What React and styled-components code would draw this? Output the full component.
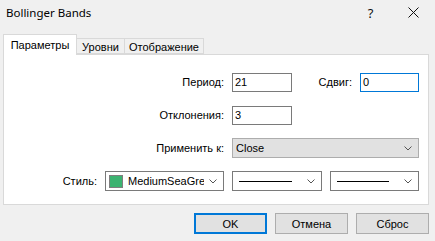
import styled, { createGlobalStyle } from "styled-components";

const GlobalStyle = createGlobalStyle`
    html, body {
        margin: 0;
        padding: 0;
        background: #f0f0f0;
    }
    * {
        box-sizing: border-box;
    }
`;

const Window = styled.div`
    width: 435px;
    height: 241px;
    background: #f0f0f0;
    display: flex;
    flex-direction: column;
    font-family: "Liberation Sans", Arial, sans-serif;
    font-size: 11px;
    color: #000;
    overflow: hidden;
`;

const TitleBar = styled.div`
    height: 25px;
    display: flex;
    align-items: center;
    padding-left: 6px;
`;

const TitleText = styled.div`
    flex: 1;
    font-family: "Noto Sans", "Open Sans", sans-serif;
    font-size: 11.5px;
    color: #000;
    padding-bottom: 1px;
`;

const CaptionButton = styled.div`
    width: 43px;
    height: 25px;
    display: flex;
    align-items: center;
    justify-content: center;
    font-family: "Noto Sans", sans-serif;
    font-size: 13px;
    color: #111;
`;

const TabStrip = styled.div`
    margin-top: 9px;
    height: 20px;
    display: flex;
    align-items: flex-end;
    padding-left: 3px;
    position: relative;
    z-index: 1;
`;

const Tab = styled.div`
    width: ${p => p.$w}px;
    height: ${p => (p.$active ? 21 : 16)}px;
    margin-bottom: ${p => (p.$active ? -1 : 0)}px;
    background: ${p => (p.$active ? "#fff" : "#f0f0f0")};
    border: 1px solid #d9d9d9;
    border-bottom: ${p => (p.$active ? "none" : "1px solid #d9d9d9")};
    border-left: ${p => (p.$first ? "1px solid #d9d9d9" : "none")};
    display: flex;
    align-items: center;
    justify-content: center;
    padding-top: ${p => (p.$active ? 0 : 1)}px;
    white-space: nowrap;
`;

const Panel = styled.div`
    margin: 0 6px 0 3px;
    height: 151px;
    background: #fff;
    border: 1px solid #d9d9d9;
    padding-top: 17px;
    display: flex;
    flex-direction: column;
    gap: 13px;
`;

const Row = styled.div`
    display: flex;
    align-items: center;
    gap: 8px;
    height: 20px;
`;

const Label = styled.div`
    width: ${p => p.$w}px;
    text-align: right;
    white-space: nowrap;
`;

const TextBox = styled.div`
    width: ${p => p.$w}px;
    height: 19px;
    border: 1px solid ${p => (p.$focused ? "#0078d7" : "#7a7a7a")};
    background: #fff;
    display: flex;
    align-items: center;
    padding-left: 2px;
`;

const Combo = styled.div`
    width: ${p => p.$w}px;
    height: 20px;
    border: 1px solid ${p => (p.$flat ? "#adadad" : "#7a7a7a")};
    background: ${p => (p.$flat ? "#e1e1e1" : "#fff")};
    display: flex;
    align-items: center;
    padding: 0 6px 0 3px;
    gap: 5px;
`;

const ComboValue = styled.div`
    flex: 1;
    display: flex;
    align-items: center;
    gap: 5px;
    white-space: nowrap;
    overflow: hidden;
`;

const Swatch = styled.div`
    width: 14px;
    height: 13px;
    background: ${p => p.$color};
    border: 1px solid #7f7f7f;
    flex-shrink: 0;
`;

const LineSample = styled.div`
    flex: 1;
    height: 1px;
    background: #000;
    margin: 0 10px 0 3px;
`;

const ButtonRow = styled.div`
    display: flex;
    justify-content: flex-end;
    gap: 8px;
    margin-top: 8px;
    padding-right: 6px;
`;

const Button = styled.div`
    width: 73px;
    height: 21px;
    background: #e1e1e1;
    border: ${p => (p.$default ? "2px solid #0078d7" : "1px solid #adadad")};
    display: flex;
    align-items: center;
    justify-content: center;
`;

const Chevron = () => (
    <svg width="8" height="5" viewBox="0 0 8 5">
        <polyline points="0.5,0.5 4,4 7.5,0.5" fill="none" stroke="#555" strokeWidth="1" />
    </svg>
);

const CloseIcon = () => (
    <svg width="11" height="11" viewBox="0 0 11 11">
        <path d="M0.5 0.5L10.5 10.5M10.5 0.5L0.5 10.5" stroke="#111" strokeWidth="1" />
    </svg>
);

const App = () => {
    return (
        <>
            <GlobalStyle />
            <Window>
                <TitleBar>
                    <TitleText>Bollinger Bands</TitleText>
                    <CaptionButton>?</CaptionButton>
                    <CaptionButton><CloseIcon /></CaptionButton>
                </TitleBar>

                <TabStrip>
                    <Tab $w={74} $active $first>Параметры</Tab>
                    <Tab $w={48}>Уровни</Tab>
                    <Tab $w={79}>Отображение</Tab>
                </TabStrip>

                <Panel>
                    <Row>
                        <Label $w={220}>Период:</Label>
                        <TextBox $w={60}>21</TextBox>
                        <Label $w={52}>Сдвиг:</Label>
                        <TextBox $w={59} $focused>0</TextBox>
                    </Row>
                    <Row>
                        <Label $w={220}>Отклонения:</Label>
                        <TextBox $w={60}>3</TextBox>
                    </Row>
                    <Row>
                        <Label $w={220}>Применить к:</Label>
                        <Combo $w={187} $flat>
                            <ComboValue>Close</ComboValue>
                            <Chevron />
                        </Combo>
                    </Row>
                    <Row>
                        <Label $w={93}>Стиль:</Label>
                        <Combo $w={119}>
                            <ComboValue>
                                <Swatch $color="#3cb371" />
                                MediumSeaGre
                            </ComboValue>
                            <Chevron />
                        </Combo>
                        <Combo $w={90}>
                            <LineSample />
                            <Chevron />
                        </Combo>
                        <Combo $w={89}>
                            <LineSample />
                            <Chevron />
                        </Combo>
                    </Row>
                </Panel>

                <ButtonRow>
                    <Button $default>OK</Button>
                    <Button>Отмена</Button>
                    <Button>Сброс</Button>
                </ButtonRow>
            </Window>
        </>
    );
};

export default App;
